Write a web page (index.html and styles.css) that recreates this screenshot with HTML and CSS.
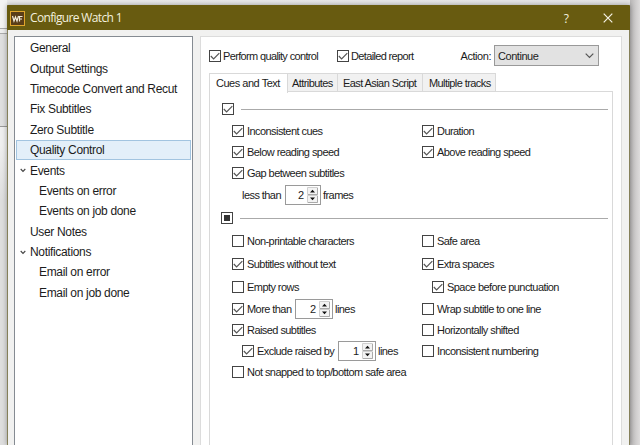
FILE: index.html
```html
<!DOCTYPE html>
<html lang="en">
<head>
<meta charset="utf-8">
<title>Configure Watch 1</title>
<link rel="stylesheet" href="styles.css">
</head>
<body>
<svg class="defs" width="0" height="0" aria-hidden="true">
  <symbol id="tick" viewBox="0 0 10 10"><path d="M.8 5l2.800 2.800L9.300 2.100" fill="none" stroke="#555" stroke-width="1.200"/></symbol>
  <symbol id="expand" viewBox="0 0 6 5"><path d="M.7 1L3 3.4 5.3 1" fill="none" stroke="#444" stroke-width="1.1"/></symbol>
  <symbol id="arrows" viewBox="0 0 11 16"><path d="M.5 .5h10v7h-10zM.5 8.500h10v7h-10z" fill="#f3f3f3" stroke="#d0d0d0"/><path d="M10.500 1v6.500H1M10.500 9v6.500H1" fill="none" stroke="#aaa"/><path d="M3 5.500L5.500 2.700 8 5.500zM3 10.500L5.500 13.300 8 10.500z" fill="#111"/></symbol>
</svg>
<div class="behind"></div>
<div class="window">
  <header class="titlebar">
    <svg class="logo" viewBox="0 0 15 15"><rect x=".5" y=".5" width="14" height="14" fill="#5a3d17" stroke="#e0a62c"/><path d="M2.500 5l1.500 5 1.500-4 1.500 4 1.500-5M9.500 10.500V5.500h3M9.500 8h2.500" fill="none" stroke="#f3ecdb" stroke-width="1.200"/></svg>
    <h1>Configure Watch 1</h1>
    <span class="help">?</span>
    <svg class="close" viewBox="0 0 10 10"><path d="M.7.7l8.600 8.600M9.300.7L.7 9.300" stroke="#f5f3e6" stroke-width="1.200"/></svg>
  </header>
  <div class="client">
    <ul class="nav">
      <li>General</li>
      <li>Output Settings</li>
      <li>Timecode Convert and Recut</li>
      <li>Fix Subtitles</li>
      <li>Zero Subtitle</li>
      <li class="selected">Quality Control</li>
      <li class="parent"><svg><use href="#expand"/></svg>Events</li>
      <li class="child">Events on error</li>
      <li class="child">Events on job done</li>
      <li>User Notes</li>
      <li class="parent"><svg><use href="#expand"/></svg>Notifications</li>
      <li class="child">Email on error</li>
      <li class="child">Email on job done</li>
    </ul>
    <main class="panel">
      <div class="top">
        <label class="opt perform"><svg class="box"><use href="#tick"/></svg>Perform quality control</label>
        <label class="opt"><svg class="box"><use href="#tick"/></svg>Detailed report</label>
        <span class="action">Action:</span>
        <div class="select">Continue<svg viewBox="0 0 9 6"><path d="M.7.7l3.800 3.800L8.300.7" fill="none" stroke="#555" stroke-width="1.200"/></svg></div>
      </div>
      <div class="tabs">
        <span class="tab active">Cues and Text</span>
        <span class="tab attributes">Attributes</span>
        <span class="tab script">East Asian Script</span>
        <span class="tab tracks">Multiple tracks</span>
      </div>
      <section class="page">
        <div class="divider"><svg class="box"><use href="#tick"/></svg><hr></div>
        <div class="grid cues">
          <label class="opt"><svg class="box"><use href="#tick"/></svg>Inconsistent cues</label>
          <label class="opt"><svg class="box"><use href="#tick"/></svg>Duration</label>
          <label class="opt"><svg class="box"><use href="#tick"/></svg>Below reading speed</label>
          <label class="opt"><svg class="box"><use href="#tick"/></svg>Above reading speed</label>
          <label class="opt"><svg class="box"><use href="#tick"/></svg>Gap between subtitles</label>
          <span></span>
          <div class="opt less"><span class="lead">less than</span><span class="spin">2<svg><use href="#arrows"/></svg></span>frames</div>
        </div>
        <div class="divider second"><span class="box mixed"></span><hr></div>
        <div class="grid text">
          <label class="opt"><svg class="box"></svg>Non-printable characters</label>
          <label class="opt"><svg class="box"></svg>Safe area</label>
          <label class="opt"><svg class="box"><use href="#tick"/></svg>Subtitles without text</label>
          <label class="opt"><svg class="box"><use href="#tick"/></svg>Extra spaces</label>
          <label class="opt"><svg class="box"></svg>Empty rows</label>
          <label class="opt sub"><svg class="box"><use href="#tick"/></svg>Space before punctuation</label>
          <div class="opt more"><svg class="box"><use href="#tick"/></svg><span class="lead">More than</span><span class="spin">2<svg><use href="#arrows"/></svg></span>lines</div>
          <label class="opt"><svg class="box"></svg>Wrap subtitle to one line</label>
          <label class="opt"><svg class="box"><use href="#tick"/></svg>Raised subtitles</label>
          <label class="opt"><svg class="box"></svg>Horizontally shifted</label>
          <div class="opt sub exclude"><svg class="box"><use href="#tick"/></svg><span class="lead">Exclude raised by</span><span class="spin">1<svg><use href="#arrows"/></svg></span>lines</div>
          <label class="opt"><svg class="box"></svg>Inconsistent numbering</label>
          <label class="opt"><svg class="box"></svg>Not snapped to top/bottom safe area</label>
        </div>
      </section>
    </main>
  </div>
</div>
</body>
</html>
```
FILE: styles.css
```css
* { box-sizing: border-box; }
body {
  margin: 0;
  width: 640px;
  height: 445px;
  overflow: hidden;
  position: relative;
  padding: 5px 10px 0 7px;
  background: linear-gradient(90deg, #e9e9ea 0, #e4e4e5 630px, #b9b7b7 630px, #dedcdc 640px);
  font: 11px "Liberation Sans", sans-serif;
  color: #1c1c1c;
}
.defs { position: absolute; }
.behind {
  position: absolute;
  left: 0;
  top: 0;
  width: 7px;
  height: 445px;
  background: linear-gradient(#f4f4f4 0 28px, #aaa 28px 29px, #eee 29px 33px, #aaa 33px 34px, #dfdfdf 34px 126px, #999 126px 127px, #efefef 127px 145px, #dedede 200px);
}
.window {
  position: relative;
  height: 440px;
  border: 1px solid #85805a;
  border-bottom: 0;
  border-top-color: #685b10;
  background: #f1f1f0;
  box-shadow: 0 0 5px rgba(0,0,0,.35);
}
.titlebar {
  height: 24px;
  margin: 0 -1px;
  padding: 0 17px 0 3px;
  display: flex;
  align-items: center;
  background: #685b10;
  color: #f3f0df;
}
.logo { width: 15px; height: 15px; margin-right: 5px; }
h1 { margin: -1px 0 0; font: 12px "Open Sans", sans-serif; letter-spacing: -.65px; flex: 1; }
.help { font: 12px "Open Sans", sans-serif; margin-right: 34px; }
.close { width: 10px; height: 10px; }
.client { display: flex; gap: 7px; padding: 6px 7px 0 6px; height: 415px; }
.nav {
  list-style: none;
  margin: 0;
  padding: 1px 1px 0;
  width: 179px;
  border: 1px solid #858b92;
  border-bottom: 0;
  background: #fff;
  font-size: 12px;
  letter-spacing: -.33px;
}
.nav li { height: 20.400px; display: flex; align-items: center; padding-left: 13px; border: 1px solid transparent; white-space: nowrap; }
.nav .selected { background: #e3eff9; border-color: #a2c4e0; }
.nav .parent { padding-left: 3px; }
.nav .parent svg { width: 6px; height: 5px; margin-right: 4px; }
.nav .child { padding-left: 22px; }
.panel { flex: 1; min-width: 0; border: 1px solid #dcdcdc; border-bottom: 0; background: #fff; padding: 8px 8px 0; }
.top { display: flex; height: 21px; align-items: center; letter-spacing: -.45px; }
.perform { width: 128px; }
.opt { display: flex; align-items: center; white-space: nowrap; letter-spacing: -.56px; }
.top .opt { letter-spacing: -.65px; }
.top .box { margin-right: 2px; }
.box { width: 12px; height: 12px; border: 1px solid #444; margin-right: 3px; flex: none; background: #fff; }
.action { margin: 0 3px 0 auto; }
.select {
  width: 105px;
  height: 21px;
  border: 1px solid #999;
  background: #e2e2e2;
  display: flex;
  align-items: center;
  justify-content: space-between;
  padding: 0 4px 0 3px;
  margin-right: 14px;
}
.select svg { width: 9px; height: 6px; }
.tabs { display: flex; align-items: flex-end; height: 20px; margin-top: 6px; position: relative; }
.tab {
  height: 18px;
  margin-bottom: 1px;
  border: 1px solid #d9d9d9;
  border-width: 1px 1px 0 0;
  background: #f1f1f1;
  display: flex;
  align-items: center;
  padding-left: 4px;
  white-space: nowrap;
  letter-spacing: -.58px;
}
.tab.active { width: 79px; height: 20px; margin-bottom: -1px; background: #fff; border-left-width: 1px; padding: 0 0 2px 6px; letter-spacing: -.48px; }
.attributes { width: 50px; }
.script { width: 85px; padding-left: 5px; }
.tracks { width: 73px; padding-left: 6px; }
.page { width: 404px; height: 354px; border: 1px solid #d9d9d9; border-bottom: 0; margin-top: -1px; padding: 11px 4px 0 11px; }
.divider { display: flex; align-items: center; height: 12px; padding-left: 1px; }
.divider hr { flex: 1; margin: 0 0 0 4px; border: 0; height: 1px; background: #aaa; }
.second { padding-left: 0; margin-top: 6px; }
.mixed { padding: 2px; background: #333 content-box; }
.grid { display: grid; grid-template-columns: 190px 1fr; padding-left: 11px; }
.cues { grid-template-rows: 21px 21px 22px 22px; padding-top: 5px; }
.text { grid-template-rows: 23px 23px 23px 21px 21px 21px 21px; padding-top: 5px; }
.sub { padding-left: 10px; }
.less { padding-left: 10px; }
.less .lead { width: 43px; }
.more .lead { width: 48px; }
.exclude .lead { width: 81px; }
.spin {
  width: 38px;
  height: 20px;
  border: 1px solid #9a9a9a;
  display: flex;
  align-items: center;
  justify-content: flex-end;
  gap: 3px;
  padding-right: 2px;
  margin-right: 2px;
  letter-spacing: 0;
}
.less .spin { width: 36px; }
.spin svg { width: 11px; height: 16px; }
```
